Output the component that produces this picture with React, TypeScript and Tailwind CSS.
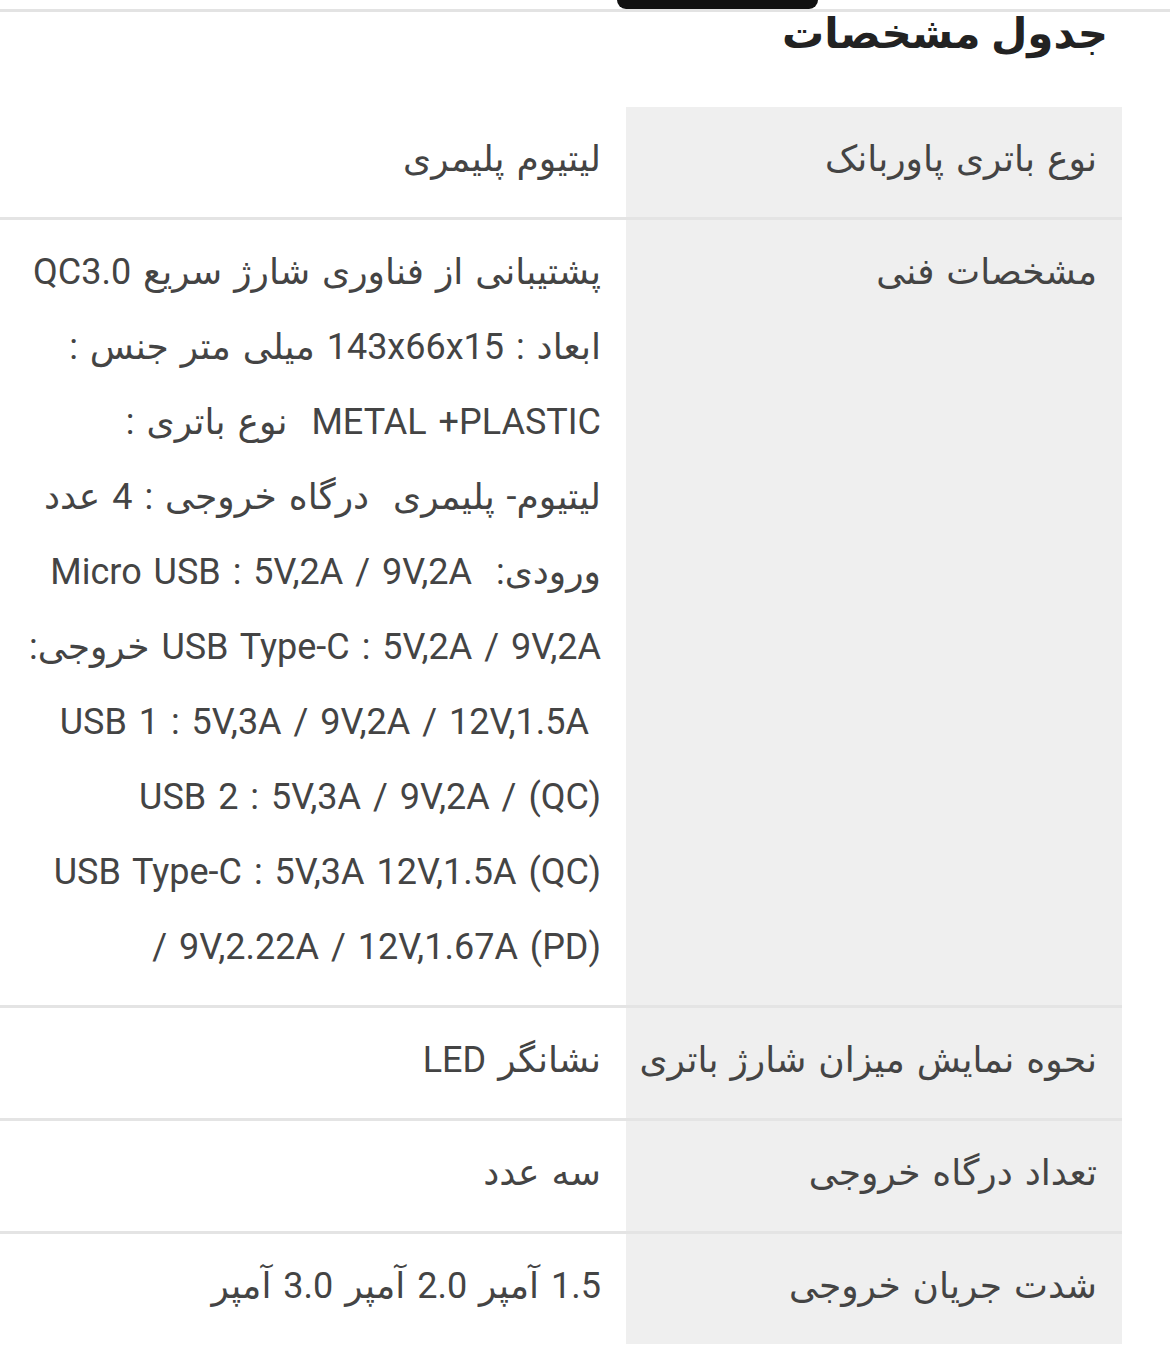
import React from "react";

const font = { fontFamily: "Roboto, 'DejaVu Sans', sans-serif" };

type Row = { label: string; value: React.ReactNode };

const specLines: React.ReactNode[] = [
  "پشتیبانی از فناوری شارژ سریع QC3.0",
  "ابعاد : 143x66x15 میلی متر جنس :",
  "METAL +PLASTIC  نوع باتری :",
  "لیتیوم- پلیمری  درگاه خروجی : 4 عدد",
  "ورودی:  Micro USB : 5V,2A / 9V,2A",
  "USB Type-C : 5V,2A / 9V,2A خروجی:",
  <span dir="ltr" className="inline-block pr-[12px]">
    USB 1 : 5V,3A / 9V,2A / 12V,1.5A
  </span>,
  <span dir="ltr">USB 2 : 5V,3A / 9V,2A / (QC)</span>,
  <span dir="ltr">USB Type-C : 5V,3A 12V,1.5A (QC)</span>,
  <span dir="ltr">/ 9V,2.22A / 12V,1.67A (PD)</span>,
];

const rows: Row[] = [
  { label: "نوع باتری پاوربانک", value: "لیتیوم پلیمری" },
  {
    label: "مشخصات فنی",
    value: (
      <>
        {specLines.map((line, i) => (
          <div key={i} className="whitespace-pre">
            {line}
          </div>
        ))}
      </>
    ),
  },
  { label: "نحوه نمایش میزان شارژ باتری", value: "نشانگر LED" },
  { label: "تعداد درگاه خروجی", value: "سه عدد" },
  { label: "شدت جریان خروجی", value: "1.5 آمپر 2.0 آمپر 3.0 آمپر" },
];

export default function App() {
  return (
    <div className="w-[1170px] h-[1350px] overflow-hidden bg-white" style={font}>
      {/* top bar */}
      <div className="relative h-[12px] border-b-[3px] border-[#e3e3e3]">
        <div className="absolute left-[617px] top-0 h-[9px] w-[201px] rounded-b-[12px] bg-[#111]" />
      </div>

      <div dir="rtl">
        <h2 className="pr-[62px] text-[42px] font-bold leading-[44px] text-[#222] h-[95px]">
          جدول مشخصات
        </h2>

        <div className="mr-[48px] [word-spacing:3px]">
          {rows.map((row, i) => (
            <div
              key={i}
              className={
                "flex " +
                (i < rows.length - 1 ? "border-b-[3px] border-[#e4e4e4]" : "")
              }
            >
              <div className="w-[496px] shrink-0 bg-[#efefef] pr-[25px] pt-[15px] pb-[20px] text-[36px] leading-[75px] text-[#444]">
                {row.label}
              </div>
              <div className="flex-1 pr-[25px] pt-[15px] pb-[20px] text-[36px] leading-[75px] text-[#444]">
                {row.value}
              </div>
            </div>
          ))}
        </div>
      </div>
    </div>
  );
}
